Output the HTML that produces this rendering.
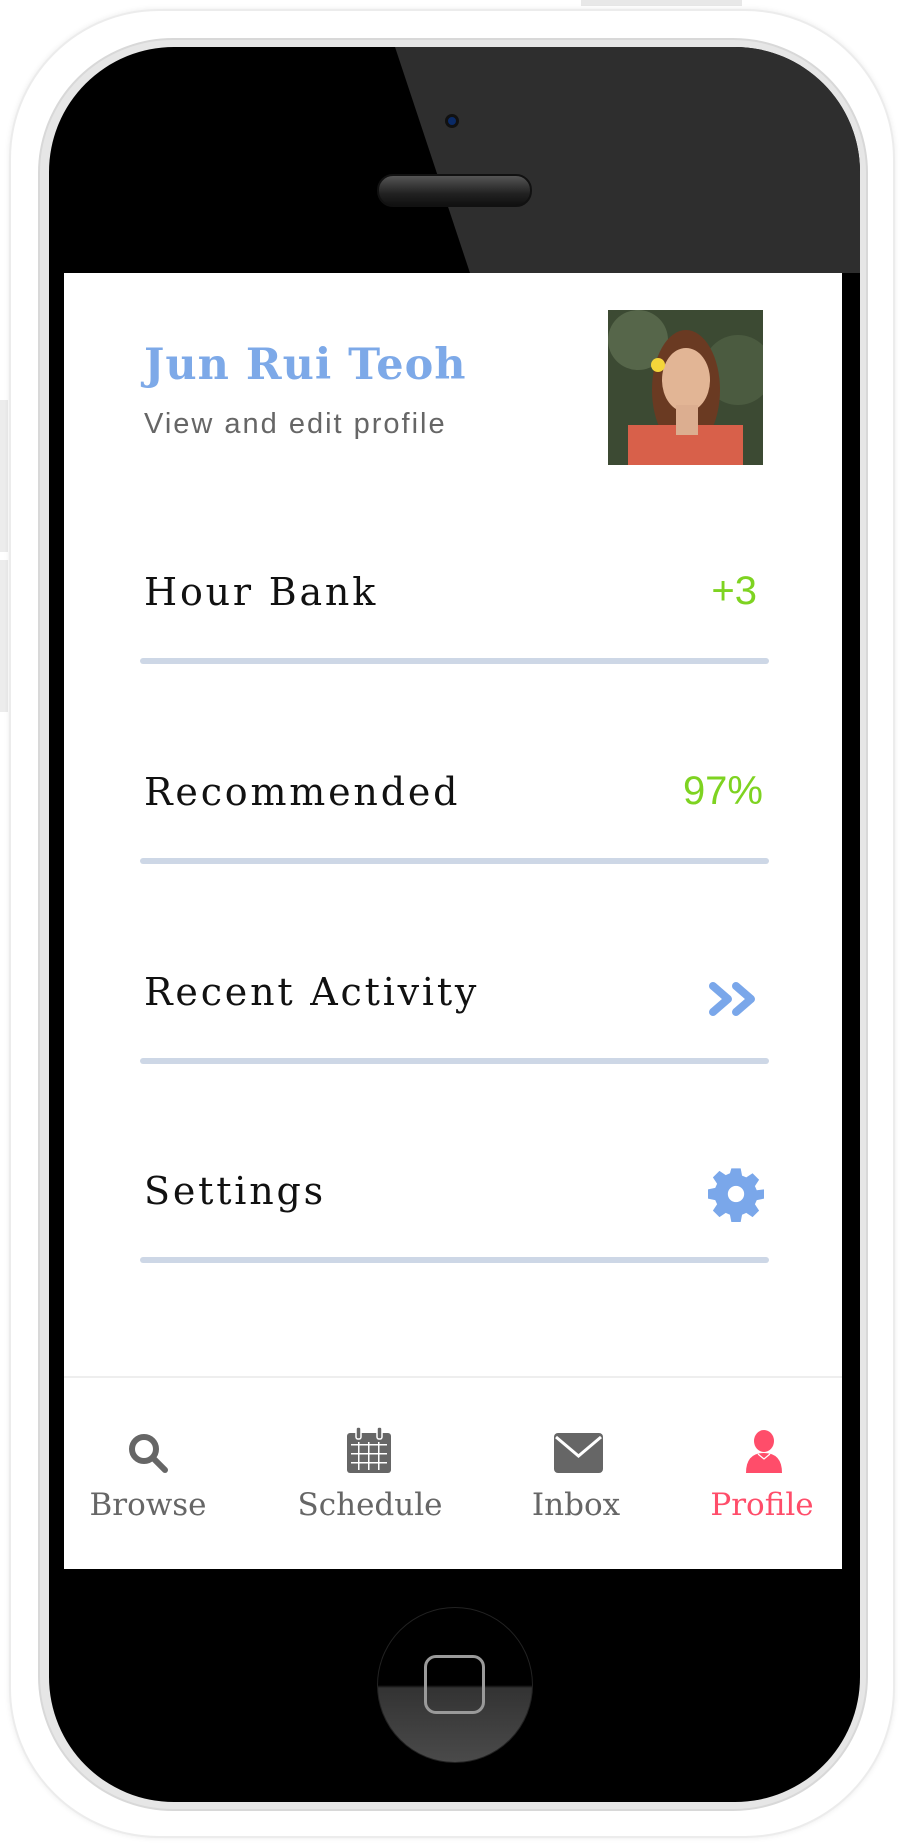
<!DOCTYPE html>
<html><head><meta charset="utf-8"><style>
*{margin:0;padding:0;box-sizing:border-box}
body{width:906px;height:1847px;background:#fff;position:relative;overflow:hidden;font-family:"DejaVu Serif","Liberation Serif",serif}
.abs{position:absolute}
.body{left:9px;top:9px;width:886px;height:1829px;border-radius:150px;background:#fff;border:2px solid #ececec;box-shadow:0 0 6px rgba(0,0,0,.08)}
.frame{left:38px;top:38px;width:830px;height:1773px;border-radius:135px;background:#e6e6e6;border:2px solid #d8d8d8}
.black{left:49px;top:47px;width:811px;height:1755px;border-radius:125px;background:#000;overflow:hidden}
.screen{left:64px;top:273px;width:778px;height:1296px;background:#fff}
.row{left:144px;font-size:38px;color:#111;letter-spacing:2.8px;font-family:"DejaVu Serif",serif;font-weight:normal}
.line{left:140px;width:629px;height:6px;background:#cdd7e6;border-radius:3px}
.val{font-family:"Liberation Sans",sans-serif;font-size:40px;color:#7ed321}
.tab{font-size:31px;color:#666;text-align:center;width:200px;top:1487px;font-family:"DejaVu Serif",serif}
</style></head><body>
<div class="abs" style="left:581px;top:0;width:161px;height:6px;background:#e8e8e8"></div>
<div class="abs" style="left:0;top:400px;width:8px;height:152px;background:#ececec"></div>
<div class="abs" style="left:0;top:560px;width:8px;height:152px;background:#ececec"></div>
<div class="abs body"></div>
<div class="abs frame"></div>
<div class="abs black">
  <svg class="abs" style="left:0;top:0" width="811" height="1755"><polygon points="346,0 811,0 811,226 421,226" fill="#2e2e2e"/></svg>
  <div class="abs" style="left:396px;top:67px;width:14px;height:14px;border-radius:50%;background:#0a2a66;border:3px solid #111"></div>
  <div class="abs" style="left:328px;top:127px;width:155px;height:33px;border-radius:16px;background:linear-gradient(#555,#222 60%,#111);border:2px solid #111"></div>
  <div class="abs" style="left:328px;top:1560px;width:156px;height:156px;border-radius:50%;background:linear-gradient(#000 50%,#333 52%,#4a4a4a);border:1px solid #222"></div>
  <div class="abs" style="left:375px;top:1608px;width:61px;height:59px;border-radius:12px;border:3px solid #9a9a9a"></div>
</div>
<div class="abs screen"></div>
<div class="abs" style="left:144px;top:340px;font-size:43px;font-weight:bold;color:#7da9e8;font-family:'DejaVu Serif',serif;letter-spacing:1px">Jun Rui Teoh</div>
<div class="abs" style="left:144px;top:408px;font-size:29px;color:#666;font-family:'Liberation Sans',sans-serif;letter-spacing:2px">View and edit profile</div>
<svg class="abs" style="left:608px;top:310px" width="155" height="155">
  <rect width="155" height="155" fill="#3c4a33"/>
  <circle cx="30" cy="30" r="30" fill="#56664a"/><circle cx="130" cy="60" r="35" fill="#4b5b40"/>
  <ellipse cx="78" cy="80" rx="34" ry="60" fill="#6a3a22"/>
  <rect x="20" y="115" width="115" height="40" fill="#d8604a"/>
  <ellipse cx="78" cy="70" rx="24" ry="32" fill="#e2b595"/>
  <rect x="68" y="95" width="22" height="30" fill="#dcae90"/>
  <circle cx="50" cy="55" r="7" fill="#f4d53a"/>
</svg>
<div class="abs row" style="top:570px">Hour Bank</div>
<div class="abs val" style="right:149px;top:569px">+3</div>
<div class="abs line" style="top:658px"></div>
<div class="abs row" style="top:770px">Recommended</div>
<div class="abs val" style="right:143px;top:769px">97%</div>
<div class="abs line" style="top:858px"></div>
<div class="abs row" style="top:970px">Recent Activity</div>
<svg class="abs" style="left:708px;top:980px" width="52" height="40"><path d="M5 6 L20 19 L5 32 M28 6 L43 19 L28 32" fill="none" stroke="#7aa7ea" stroke-width="8" stroke-linecap="round" stroke-linejoin="round"/></svg>
<div class="abs line" style="top:1058px"></div>
<div class="abs row" style="top:1169px">Settings</div>
<svg class="abs" style="left:708px;top:1166px" width="56" height="56" viewBox="0 0 24 24"><path fill="#7aa7ea" fill-rule="evenodd" d="M10 1h4l.6 3.1 1.8.8 2.7-1.8 2.8 2.8-1.8 2.7.8 1.8L24 10v4l-3.1.6-.8 1.8 1.8 2.7-2.8 2.8-2.7-1.8-1.8.8L14 24h-4l-.6-3.1-1.8-.8-2.7 1.8-2.8-2.8 1.8-2.7-.8-1.8L0 14v-4l3.1-.6.8-1.8-1.8-2.7 2.8-2.8 2.7 1.8 1.8-.8zM12 8.5a3.5 3.5 0 1 0 0 7 3.5 3.5 0 0 0 0-7z"/></svg>
<div class="abs line" style="top:1257px"></div>
<div class="abs" style="left:64px;top:1376px;width:778px;height:2px;background:#eeeeee"></div>
<svg class="abs" style="left:127px;top:1432px" width="44" height="42"><circle cx="17" cy="17" r="12" fill="none" stroke="#666" stroke-width="6"/><path d="M26 26 L38 38" stroke="#666" stroke-width="6" stroke-linecap="round"/></svg>
<svg class="abs" style="left:346px;top:1426px" width="46" height="48"><rect x="1" y="7" width="44" height="40" rx="3" fill="#666"/><rect x="10" y="1" width="5" height="12" rx="2" fill="#666" stroke="#fff" stroke-width="1.5"/><rect x="31" y="1" width="5" height="12" rx="2" fill="#666" stroke="#fff" stroke-width="1.5"/><g fill="#fff"><rect x="5" y="18" width="36" height="1.5"/><rect x="5" y="27" width="36" height="1.5"/><rect x="5" y="36" width="36" height="1.5"/><rect x="12" y="16" width="1.5" height="28"/><rect x="22" y="16" width="1.5" height="28"/><rect x="32" y="16" width="1.5" height="28"/></g></svg>
<svg class="abs" style="left:554px;top:1433px" width="49" height="40"><rect x="0" y="0" width="49" height="40" rx="4" fill="#666"/><path d="M2 4 L24.5 23 L47 4" fill="none" stroke="#fff" stroke-width="3"/></svg>
<svg class="abs" style="left:744px;top:1429px" width="40" height="46"><ellipse cx="20" cy="12" rx="10" ry="11" fill="#ff4d6a"/><path d="M2 44 Q2 24 20 24 Q38 24 38 44 Z" fill="#ff4d6a"/><path d="M14 25 L20 30 L26 25" fill="none" stroke="#fff" stroke-width="1.2"/></svg>
<div class="abs tab" style="left:48px">Browse</div>
<div class="abs tab" style="left:270px">Schedule</div>
<div class="abs tab" style="left:476px">Inbox</div>
<div class="abs tab" style="left:662px;color:#ff4d6a">Profile</div>
</body></html>
